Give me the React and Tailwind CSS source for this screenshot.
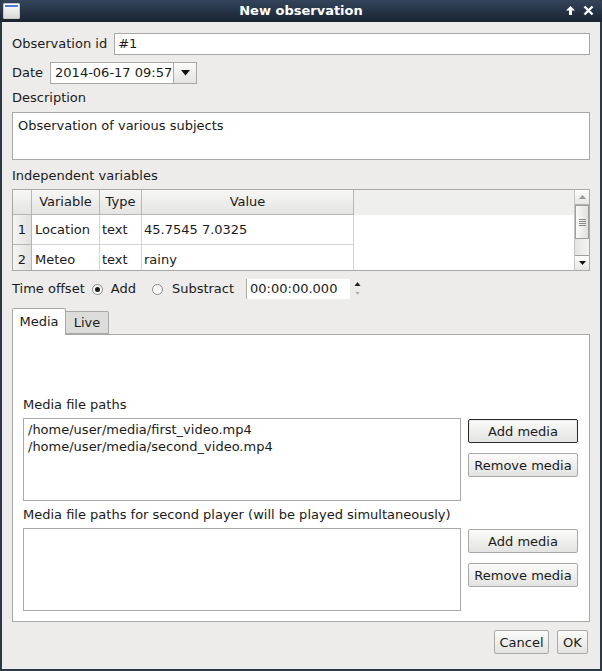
import React from "react";

const font = { fontFamily: '"DejaVu Sans", Verdana, sans-serif' };

function Button({ children, focused, className = "" }) {
  return (
    <div
      className={
        "flex items-center justify-center rounded-[2px] bg-gradient-to-b from-[#fbfbfa] to-[#e3e3e1] text-[13px] leading-none text-[#1a1a1a] " +
        (focused ? "border border-[#2a2a2a] shadow-[inset_0_0_0_1px_#e8e8e8]" : "border border-[#a9a9a7]") +
        " " +
        className
      }
    >
      {children}
    </div>
  );
}

function Radio({ checked }) {
  return (
    <span className="flex h-[11px] w-[11px] items-center justify-center rounded-full border border-[#8c8c8c] bg-gradient-to-b from-[#f2f2f2] to-white">
      {checked && <span className="h-[5px] w-[5px] rounded-full bg-[#1a1a1a]" />}
    </span>
  );
}

function Header({ children, className = "" }) {
  return (
    <div
      className={
        "flex h-[25px] items-center justify-center border-r border-b border-[#b6b6b4] bg-gradient-to-b from-[#f7f7f6] to-[#e4e4e2] " +
        className
      }
    >
      {children}
    </div>
  );
}

function MediaBlock({ label, items, focused }) {
  return (
    <div className="flex flex-col">
      <div className="h-[16px] leading-[16px]">{label}</div>
      <div className="mt-[5px] flex gap-[7px]">
        <div className="h-[83px] flex-1 border border-[#a9a9a7] bg-white px-[4px] pt-[2px] leading-[17px]">
          {items.map((t) => (
            <div key={t}>{t}</div>
          ))}
        </div>
        <div className="flex w-[110px] flex-col gap-[10px] pt-[1px]">
          <Button focused={focused} className="h-[24px]">Add media</Button>
          <Button className="h-[24px]">Remove media</Button>
        </div>
      </div>
    </div>
  );
}

export default function App() {
  return (
    <div
      className="flex h-[671px] w-[602px] flex-col overflow-hidden bg-[#2b3848] text-[13px] text-[#1a1a1a]"
      style={font}
    >
      {/* title bar */}
      <div className="relative flex h-[22px] shrink-0 items-center justify-center rounded-t-[4px] bg-gradient-to-b from-[#34445a] to-[#1a2433]">
        <div className="absolute left-[3px] top-[3px] h-[16px] w-[17px] rounded-[1px] border border-[#c8c8c8] bg-gradient-to-b from-white to-[#d8d8d8]">
          <div className="mx-[1px] mt-[1px] h-[2px] bg-[#4a7fd0]" />
        </div>
        <span className="text-[13px] font-bold text-white">New observation</span>
        <div className="absolute right-[8px] top-[5px] flex items-center gap-[7px]">
          <svg width="11" height="11" viewBox="0 0 11 11">
            <path d="M5.5 1 L10 5.5 H7 V10 H4 V5.5 H1 Z" fill="#fff" />
          </svg>
          <svg width="11" height="11" viewBox="0 0 11 11">
            <path d="M1.5 1.5 L9.5 9.5 M9.5 1.5 L1.5 9.5" stroke="#fff" strokeWidth="2.4" />
          </svg>
        </div>
      </div>

      {/* body */}
      <div className="mx-[2px] mb-[2px] flex flex-1 flex-col bg-[#edecea] px-[10px] pt-[11px]">
        <div className="flex h-[22px] items-center gap-[7px]">
          <span>Observation id</span>
          <div className="flex h-[22px] flex-1 items-center border border-[#a9a9a7] bg-white px-[3px]">#1</div>
        </div>

        <div className="mt-[7px] flex h-[22px] items-center gap-[7px]">
          <span>Date</span>
          <div className="flex h-[22px]">
            <div className="flex w-[124px] items-center overflow-hidden whitespace-nowrap border border-[#a9a9a7] bg-white pl-[4px]">
              2014-06-17 09:57
            </div>
            <div className="flex w-[23px] items-center justify-center border border-l-0 border-[#a9a9a7] bg-gradient-to-b from-[#fbfbfa] to-[#e3e3e1]">
              <svg width="9" height="6" viewBox="0 0 9 6">
                <path d="M0 0 H9 L4.5 5.5 Z" fill="#111" />
              </svg>
            </div>
          </div>
        </div>

        <div className="mt-[6px] h-[16px] leading-[16px]">Description</div>
        <div className="mt-[6px] h-[48px] border border-[#a9a9a7] bg-white px-[5px] pt-[5px] leading-[16px]">
          Observation of various subjects
        </div>

        <div className="mt-[7px] h-[16px] leading-[17px]">Independent variables</div>

        {/* table */}
        <div className="mt-[6px] flex h-[82px] overflow-hidden border border-[#a9a9a7] bg-white">
          <div className="flex flex-1 flex-col overflow-hidden">
            <div className="flex bg-[#efefee]">
              <Header className="w-[19px]" />
              <Header className="w-[68px]">Variable</Header>
              <Header className="w-[42px]">Type</Header>
              <Header className="w-[212px]">Value</Header>
            </div>
            {[
              ["1", "Location", "text", "45.7545 7.0325"],
              ["2", "Meteo", "text", "rainy"],
            ].map(([n, v, t, val]) => (
              <div key={n} className="flex h-[30px] shrink-0">
                <div className="flex w-[19px] items-center justify-center border-r border-b border-[#b6b6b4] bg-gradient-to-r from-[#f4f4f3] to-[#e2e2e0]">
                  {n}
                </div>
                <div className="flex w-[68px] items-center border-r border-b border-[#d4d4d2] px-[3px]">{v}</div>
                <div className="flex w-[42px] items-center border-r border-b border-[#d4d4d2] px-[2px]">{t}</div>
                <div className="flex w-[212px] items-center border-r border-b border-[#d4d4d2] px-[2px]">{val}</div>
              </div>
            ))}
          </div>
          {/* scrollbar */}
          <div className="flex w-[15px] flex-col border-l border-[#c4c4c2] bg-[#ececea]">
            <div className="flex h-[15px] items-center justify-center border-b border-[#b0b0ae] bg-gradient-to-b from-white to-[#e6e6e4]">
              <svg width="7" height="4" viewBox="0 0 7 4">
                <path d="M0 4 H7 L3.5 0 Z" fill="#9a9a9a" />
              </svg>
            </div>
            <div className="flex h-[34px] flex-col items-center justify-center gap-[1px] border border-[#9e9e9c] bg-gradient-to-r from-[#fafafa] to-[#e0e0de]">
              {[0, 1, 2, 3].map((i) => (
                <div key={i} className="h-[1px] w-[7px] bg-[#8a8a8a]" />
              ))}
            </div>
            <div className="flex-1 bg-gradient-to-r from-[#e4e4e2] to-[#f4f4f3]" />
            <div className="flex h-[15px] items-center justify-center border-t border-[#9e9e9c] bg-gradient-to-b from-white to-[#e6e6e4]">
              <svg width="7" height="4" viewBox="0 0 7 4">
                <path d="M0 0 H7 L3.5 4 Z" fill="#111" />
              </svg>
            </div>
          </div>
        </div>

        {/* time offset */}
        <div className="mt-[8px] flex h-[20px] items-center">
          <span>Time offset</span>
          <span className="ml-[7px]">
            <Radio checked />
          </span>
          <span className="ml-[8px]">Add</span>
          <span className="ml-[16px]">
            <Radio />
          </span>
          <span className="ml-[9px]">Substract</span>
          <div className="ml-[12px] flex h-[20px] w-[104px] items-center border-l border-[#a9a9a7] bg-white pl-[3px]">
            00:00:00.000
          </div>
          <svg className="ml-[4px]" width="7" height="16" viewBox="0 0 7 16">
            <path d="M0.5 5 H6.5 L3.5 1 Z" fill="#222" />
            <path d="M1.5 11 H5.5 L3.5 14 Z" fill="#aaa" />
          </svg>
        </div>

        {/* tabs */}
        <div className="mt-[9px] flex items-end">
          <div className="relative z-10 -mb-px flex h-[27px] w-[54px] items-center justify-center rounded-t-[2px] border border-b-0 border-[#a9a9a7] bg-white">
            Media
          </div>
          <div className="flex h-[23px] w-[43px] items-center justify-center rounded-tr-[2px] border border-l-0 border-[#a9a9a7] bg-[#dcdcda]">
            Live
          </div>
        </div>
        <div className="flex h-[288px] flex-col border border-[#a9a9a7] bg-white pl-[10px] pr-[11px] pt-[62px]">
          <MediaBlock
            label="Media file paths"
            focused
            items={["/home/user/media/first_video.mp4", "/home/user/media/second_video.mp4"]}
          />
          <div className="mt-[6px]">
            <MediaBlock label="Media file paths for second player (will be played simultaneously)" items={[]} />
          </div>
        </div>

        {/* dialog buttons */}
        <div className="mt-[8px] flex justify-end gap-[8px] pr-[2px]">
          <Button className="h-[24px] w-[55px]">Cancel</Button>
          <Button className="h-[24px] w-[31px]">OK</Button>
        </div>
      </div>
    </div>
  );
}
